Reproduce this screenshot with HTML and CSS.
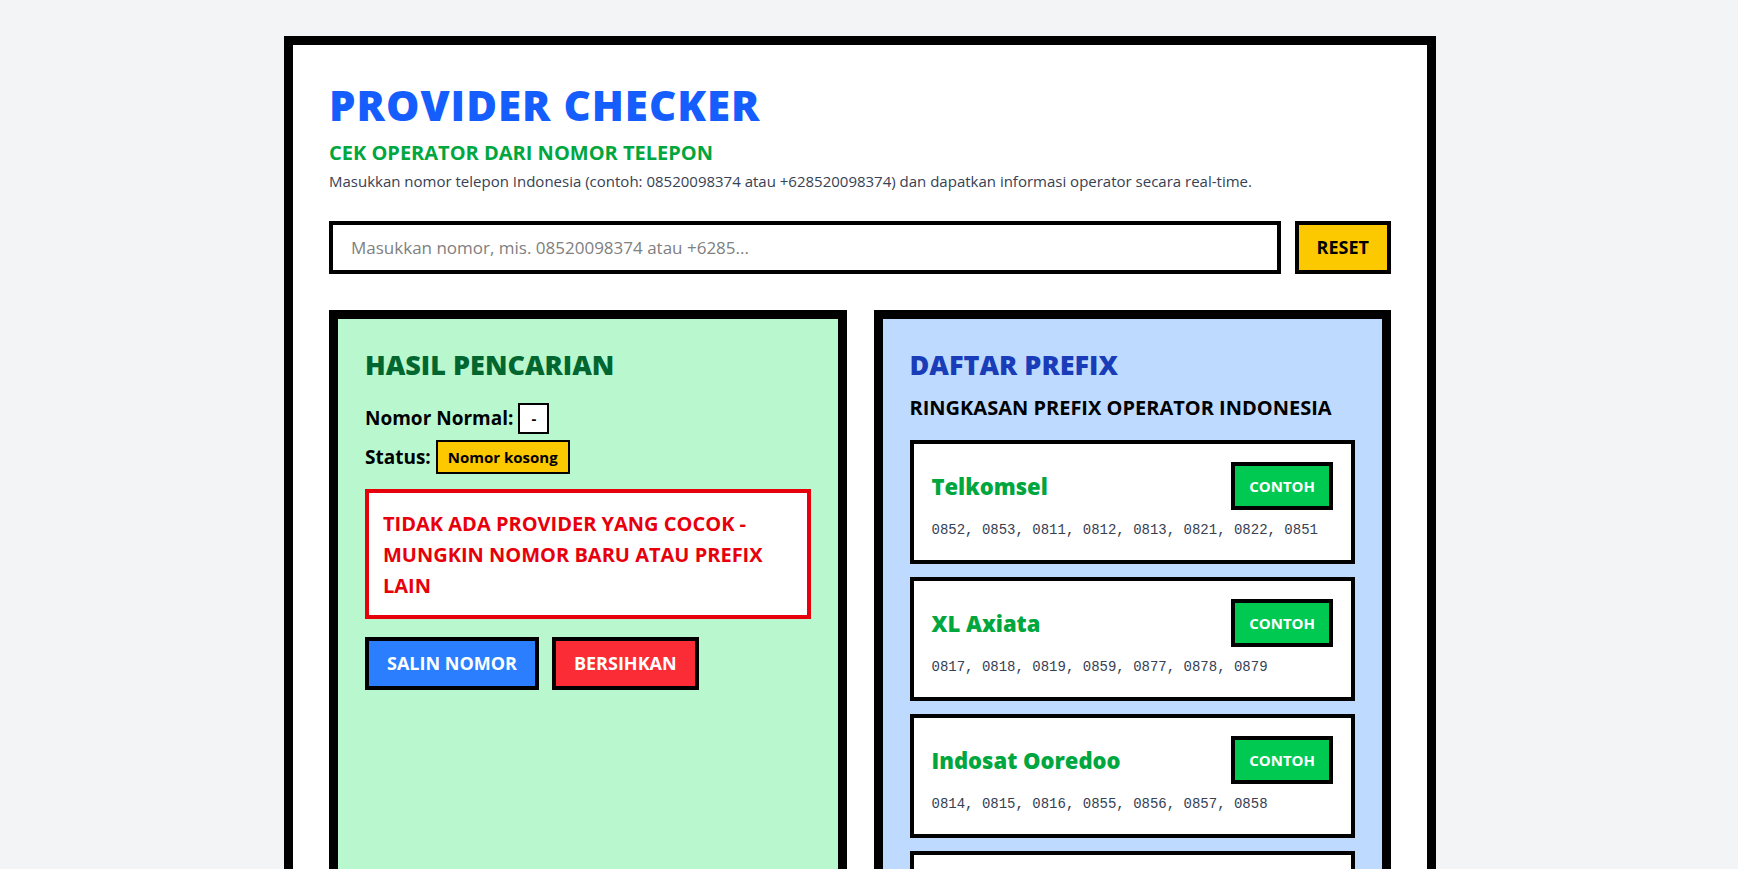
FILE: index.html
```html
<!DOCTYPE html>
<html lang="id">
<head>
<meta charset="utf-8">
<meta name="viewport" content="width=device-width, initial-scale=1">
<title>Provider Checker</title>
<link rel="stylesheet" href="styles.css">
</head>
<body>
<main class="shell">
  <header class="header">
    <h1 class="title">PROVIDER CHECKER</h1>
    <p class="subtitle">CEK OPERATOR DARI NOMOR TELEPON</p>
    <p class="intro"><label for="phone">Masukkan nomor telepon Indonesia (contoh: 08520098374 atau +628520098374) dan dapatkan informasi operator secara real-time.</label></p>
  </header>
  <form class="search">
    <input class="search-input" id="phone" type="tel" placeholder="Masukkan nomor, mis. 08520098374 atau +6285...">
    <button class="button button-yellow" type="reset">RESET</button>
  </form>
  <div class="panels">
    <section class="panel panel-green">
      <h2 class="panel-title">HASIL PENCARIAN</h2>
      <dl class="facts">
        <div class="fact"><dt>Nomor Normal:</dt><dd class="tag">-</dd></div>
        <div class="fact"><dt>Status:</dt><dd class="tag tag-yellow">Nomor kosong</dd></div>
      </dl>
      <p class="alert">TIDAK ADA PROVIDER YANG COCOK - MUNGKIN NOMOR BARU ATAU PREFIX LAIN</p>
      <div class="actions">
        <button class="button button-blue" type="button">SALIN NOMOR</button>
        <button class="button button-red" type="button">BERSIHKAN</button>
      </div>
    </section>
    <section class="panel panel-blue">
      <h2 class="panel-title">DAFTAR PREFIX</h2>
      <p class="panel-subtitle">RINGKASAN PREFIX OPERATOR INDONESIA</p>
      <ul class="cards">
        <li class="card">
          <div class="card-head"><h3 class="card-name">Telkomsel</h3><button class="button button-small" type="button">CONTOH</button></div>
          <p class="prefixes">0852, 0853, 0811, 0812, 0813, 0821, 0822, 0851</p>
        </li>
        <li class="card">
          <div class="card-head"><h3 class="card-name">XL Axiata</h3><button class="button button-small" type="button">CONTOH</button></div>
          <p class="prefixes">0817, 0818, 0819, 0859, 0877, 0878, 0879</p>
        </li>
        <li class="card">
          <div class="card-head"><h3 class="card-name">Indosat Ooredoo</h3><button class="button button-small" type="button">CONTOH</button></div>
          <p class="prefixes">0814, 0815, 0816, 0855, 0856, 0857, 0858</p>
        </li>
        <li class="card">
          <div class="card-head"><h3 class="card-name">Tri</h3><button class="button button-small" type="button">CONTOH</button></div>
          <p class="prefixes">0895, 0896, 0897, 0898, 0899</p>
        </li>
      </ul>
    </section>
  </div>
</main>
</body>
</html>
```
FILE: styles.css
```css
* { box-sizing: border-box; margin: 0; padding: 0; }

body {
  padding: 36px 54px 36px 36px;
  background: #f3f4f6;
  color: #000;
  font-family: "Segoe UI", "Open Sans", "Noto Sans", sans-serif;
  font-size: 18px;
  line-height: 27px;
}

.shell {
  max-width: 1152px;
  margin: 0 auto;
  padding: 36px;
  border: 9px solid #000;
  background: #fff;
}

.header { margin-bottom: 26px; }
.title { color: #155dfc; font-size: 42px; font-weight: 800; line-height: 48px; letter-spacing: 1px; }
.subtitle { margin-top: 8px; color: #00a63e; font-size: 20px; font-weight: 700; line-height: 31px; }
.intro { color: #364153; font-size: 15px; line-height: 27px; }

.search { display: flex; gap: 14px; margin-bottom: 36px; }
.search-input {
  flex: 1;
  min-width: 0;
  padding: 9px 18px;
  border: 4px solid #000;
  background: #fff;
  font: inherit;
  font-size: 17px;
}
.search-input::placeholder { color: #808080; opacity: 1; }

.button {
  padding: 9px 18px;
  border: 4px solid #000;
  color: #fff;
  font: inherit;
  font-size: 18px;
  font-weight: 700;
  line-height: 27px;
  cursor: pointer;
}
.button-yellow { background: #fcc800; color: #000; }
.button-blue { background: #2b7fff; }
.button-red { background: #fb2c36; }
.button-small { padding: 9px 14px; background: #00c951; font-size: 15px; line-height: 22px; }
.search .button, .actions .button { min-height: 53px; }

.panels { display: grid; grid-template-columns: 1fr 1fr; gap: 27px; }
.panel { min-width: 0; padding: 27px; border: 9px solid #000; }
.panel-green { background: #b9f8cf; }
.panel-blue { background: #bedbff; }
.panel-title { margin-bottom: 8px; font-size: 27px; font-weight: 800; line-height: 38px; }
.panel-green .panel-title { margin-bottom: 19px; color: #016630; }
.panel-blue .panel-title { color: #193cb8; }
.panel-subtitle { margin-bottom: 17px; font-size: 20px; font-weight: 700; line-height: 31px; }

.facts { display: grid; gap: 6px; margin-bottom: 15px; font-weight: 700; }
.fact { display: flex; align-items: center; gap: 5px; font-size: 19px; }
.tag { padding: 2px 11px; border: 2px solid #000; background: #fff; font-size: 15px; line-height: 23px; }
.tag-yellow { padding: 4px 10px; background: #fcc800; line-height: 22px; }

.alert {
  margin-bottom: 18px;
  padding: 15px 14px 14px;
  border: 4px solid #e7000b;
  background: #fff;
  color: #e7000b;
  font-size: 20px;
  font-weight: 700;
  line-height: 31px;
}
.actions { display: flex; gap: 13px; }

.cards { display: grid; gap: 13px; list-style: none; }
.card { padding: 18px; border: 4px solid #000; background: #fff; }
.card-head { display: flex; align-items: center; justify-content: space-between; margin-bottom: 9px; }
.card-name { color: #00a63e; font-size: 22px; font-weight: 800; line-height: 31px; }
.prefixes { color: #364153; font-family: Consolas, "Liberation Mono", monospace; font-size: 14px; line-height: 23px; }
```
